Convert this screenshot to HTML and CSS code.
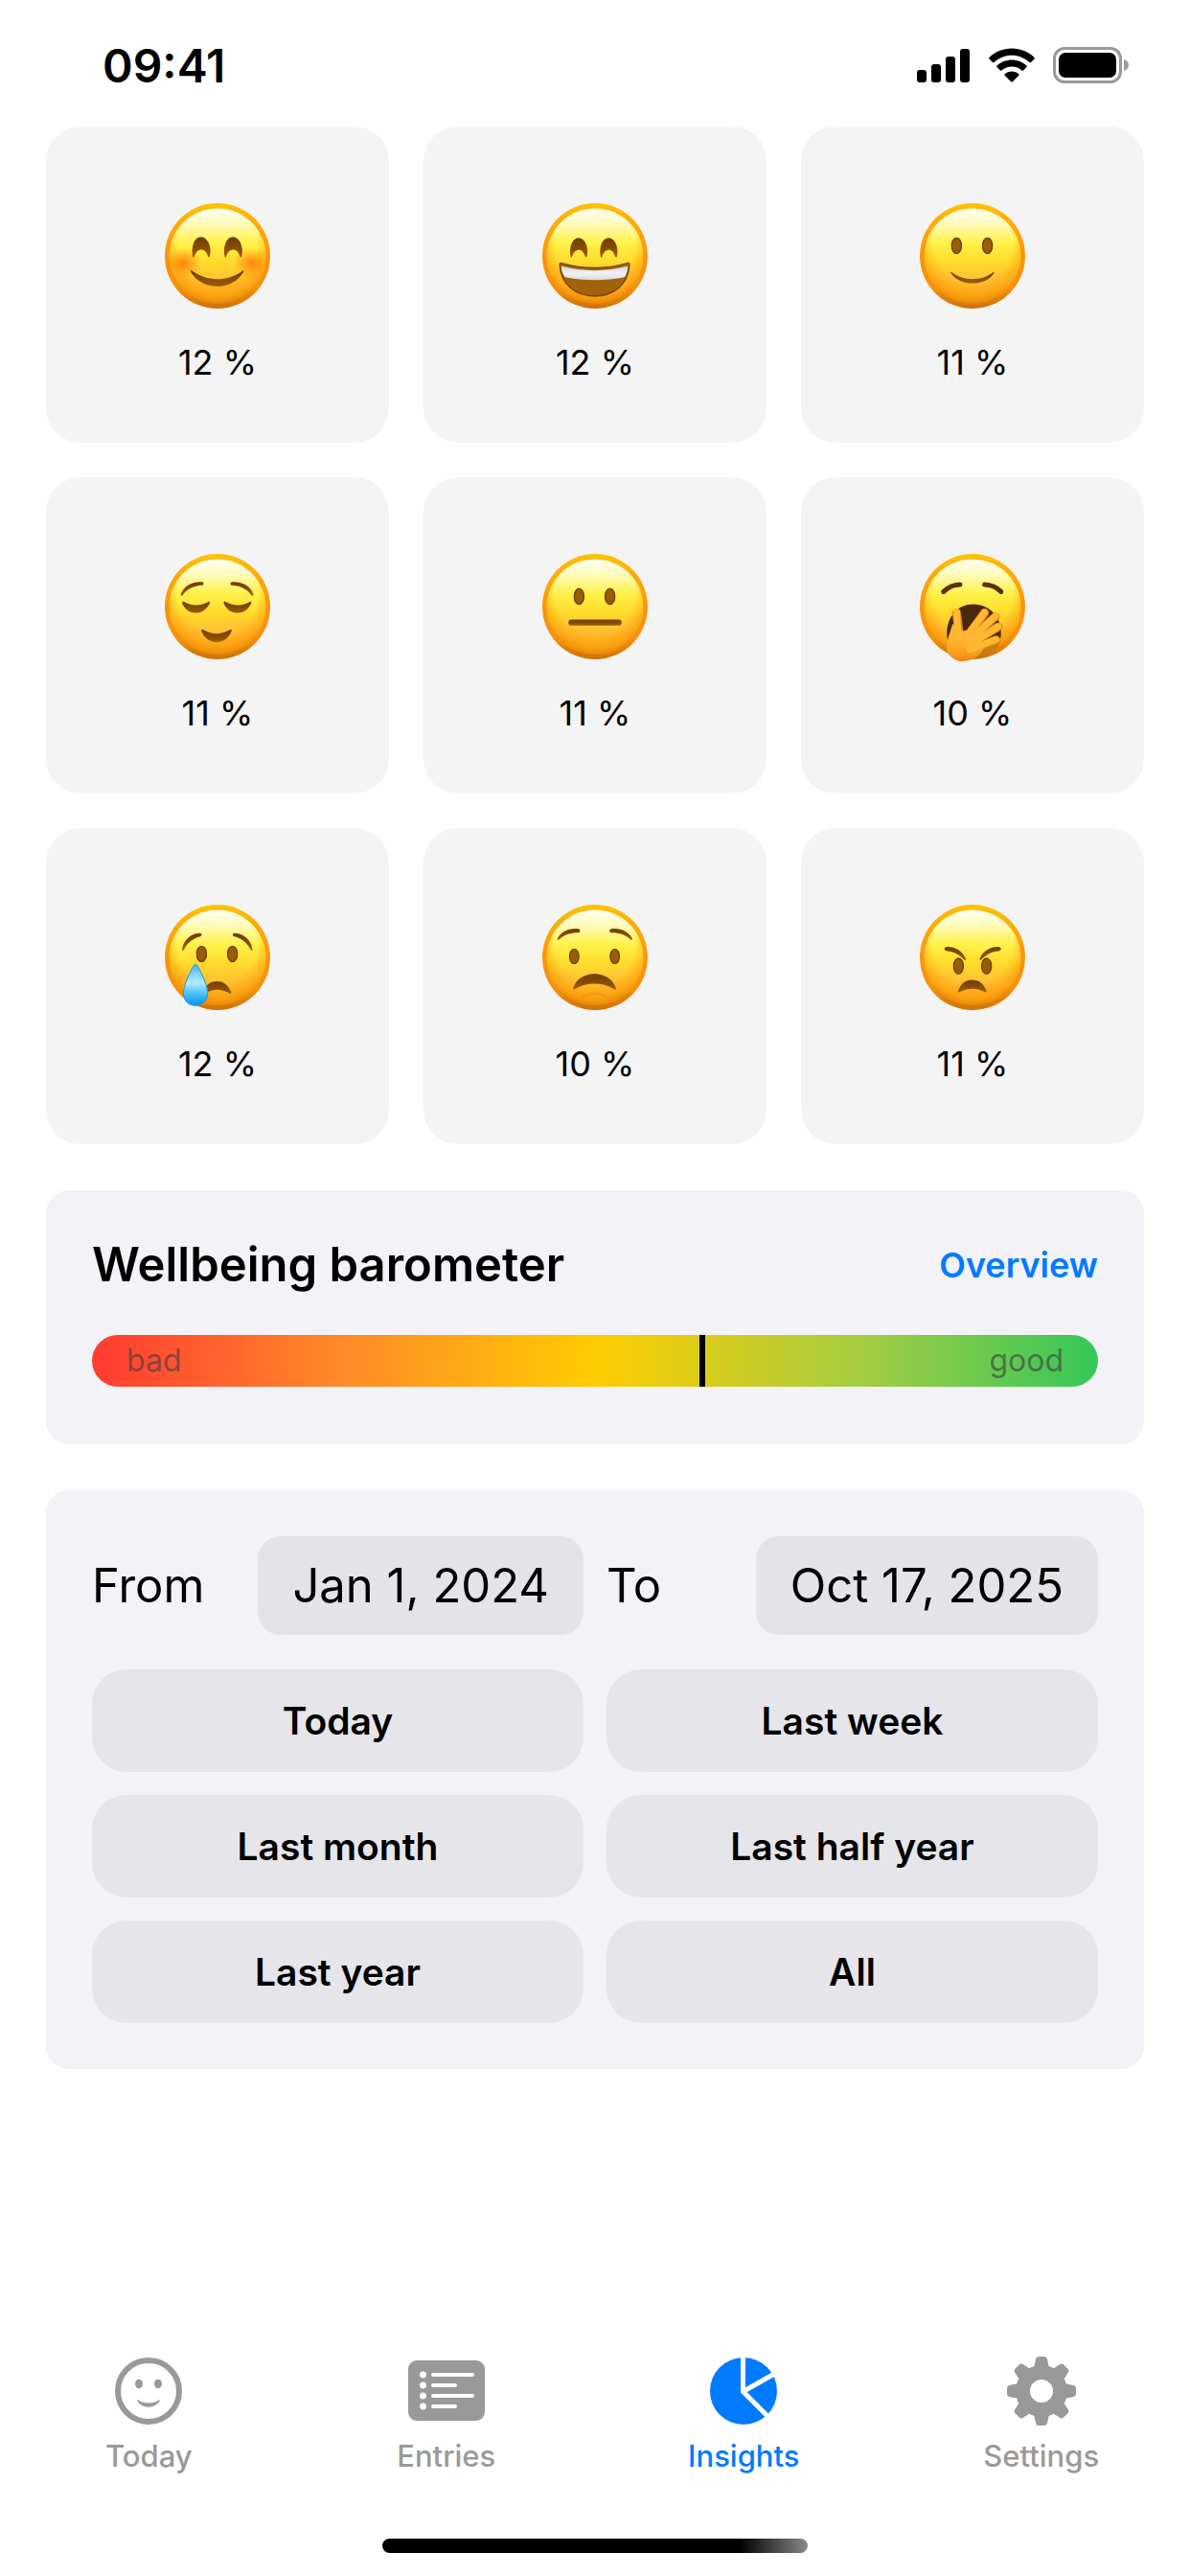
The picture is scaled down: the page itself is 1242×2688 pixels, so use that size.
FILE: index.html
```html
<!DOCTYPE html>
<html lang="en">
<head>
    <meta charset="UTF-8">
    <meta name="viewport" content="width=device-width, initial-scale=1.0">
    <title>Insights</title>
    <link rel="stylesheet" href="styles.css">
</head>
<body>

    <!-- shared face parts -->
    <svg class="defs" aria-hidden="true">
        <defs>
            <linearGradient id="rim" x1="0" y1="0" x2="0" y2="1">
                <stop offset="0" stop-color="#ffc400"/>
                <stop offset="0.15" stop-color="#ffae08"/>
                <stop offset="0.5" stop-color="#fb940c"/>
                <stop offset="0.8" stop-color="#f5920c"/>
                <stop offset="1" stop-color="#cc7206"/>
            </linearGradient>
            <linearGradient id="shine" x1="0" y1="0" x2="0" y2="1">
                <stop offset="0" stop-color="#fffef0"/>
                <stop offset="0.16" stop-color="#fffbbc"/>
                <stop offset="0.36" stop-color="#fff24a"/>
                <stop offset="0.56" stop-color="#ffdc2c"/>
                <stop offset="0.76" stop-color="#ffc032"/>
                <stop offset="1" stop-color="#fda814"/>
            </linearGradient>
            <radialGradient id="edge" cx="0.5" cy="0.36" r="0.64">
                <stop offset="0.64" stop-color="#ffa010" stop-opacity="0"/>
                <stop offset="0.86" stop-color="#fc9f0c" stop-opacity="0.7"/>
                <stop offset="1" stop-color="#e88608" stop-opacity="1"/>
            </radialGradient>
            <radialGradient id="blush">
                <stop offset="0" stop-color="#ff7a0a" stop-opacity="0.9"/>
                <stop offset="1" stop-color="#ff8a0a" stop-opacity="0"/>
            </radialGradient>
            <linearGradient id="teeth" x1="0" y1="0" x2="0" y2="1">
                <stop offset="0" stop-color="#cfd0d6"/>
                <stop offset="0.5" stop-color="#f3f3f6"/>
                <stop offset="1" stop-color="#d8d8de"/>
            </linearGradient>
            <linearGradient id="tear" x1="0" y1="0" x2="0" y2="1">
                <stop offset="0" stop-color="#46b4f0"/>
                <stop offset="0.45" stop-color="#b6ebff"/>
                <stop offset="0.7" stop-color="#4cc4fb"/>
                <stop offset="1" stop-color="#0a8fe8"/>
            </linearGradient>
            <linearGradient id="hand" x1="0" y1="0" x2="0" y2="1">
                <stop offset="0" stop-color="#ffb834"/>
                <stop offset="0.6" stop-color="#ffae2a"/>
                <stop offset="1" stop-color="#ee8810"/>
            </linearGradient>
            <linearGradient id="dark" x1="0" y1="0" x2="0" y2="1">
                <stop offset="0" stop-color="#6e3c00"/>
                <stop offset="1" stop-color="#9c5c04"/>
            </linearGradient>
        </defs>
        <symbol id="face" viewBox="0 0 109 109">
            <circle cx="54.5" cy="54.5" r="54.5" fill="url(#rim)"/>
            <ellipse cx="54.5" cy="54.5" rx="50" ry="49" fill="url(#shine)"/>
            <ellipse cx="54.5" cy="54.5" rx="50.5" ry="49.5" fill="url(#edge)"/>
        </symbol>
        <symbol id="arch" viewBox="0 0 20 22" overflow="visible">
            <path d="M1 20.5C-1.5 9 3.5 0 9.5 0C15.5 0 21 9 18.5 20C18 21.5 17 21 16.5 19.5C15 15.5 13 13 9.8 13C6.5 13 4 15.5 2.5 20C2 21.5 1.3 22 1 20.5Z" fill="url(#dark)"/>
        </symbol>
        <symbol id="eye" viewBox="0 0 12 18">
            <ellipse cx="6" cy="9" rx="5" ry="8" fill="#9a5c06" stroke="#744200" stroke-width="1.5"/>
        </symbol>
        <symbol id="cog" viewBox="0 0 80 72">
            <path d="M32 12L34 2.5Q34.600 0 37 0H43Q45.4 0 46 2.5L48 12V60L46 69.5Q45.4 72 43 72H37Q34.6 72 34 69.5L32 60Z"/>
        </symbol>
    </svg>

    <header class="status-bar">
        <time>09:41</time>
        <div class="status-icons">
            <svg width="56" height="36" viewBox="0 0 56 36">
                <rect x="0" y="23" width="10" height="13" rx="3"/>
                <rect x="15" y="17" width="10" height="19" rx="3"/>
                <rect x="30" y="9" width="10" height="27" rx="3"/>
                <rect x="45" y="1" width="10" height="35" rx="3"/>
            </svg>
            <svg width="48" height="36" viewBox="0 0 48 36">
                <path d="M24 0.5C33 0.5 41.5 4 47.5 10Q48.2 10.8 47.5 11.6L44 15Q43.3 15.7 42.5 15C37.5 10.3 31 7.7 24 7.7S10.5 10.3 5.5 15Q4.7 15.7 4 15L0.5 11.6Q-0.2 10.8 0.5 10C6.5 4 15 0.5 24 0.5Z"/>
                <path d="M24 12.5C30 12.5 35.5 14.8 39.5 18.5Q40.3 19.3 39.5 20.1L36 23.5Q35.3 24.2 34.5 23.5C31.6 21 28 19.6 24 19.6S16.4 21 13.5 23.5Q12.7 24.2 12 23.5L8.5 20.1Q7.7 19.3 8.5 18.5C12.5 14.8 18 12.5 24 12.5Z"/>
                <path d="M24 24.5C26.8 24.5 29.3 25.5 31.3 27.2Q32 28 31.3 28.8L24.8 35.3Q24 36 23.2 35.3L16.7 28.8Q16 28 16.7 27.2C18.7 25.5 21.2 24.5 24 24.5Z"/>
            </svg>
            <svg width="80" height="38" viewBox="0 0 80 38">
                <rect x="1.5" y="1.5" width="69" height="35" rx="10.5" fill="none" stroke="#999" stroke-width="3"/>
                <rect x="6" y="6" width="60" height="26" rx="7"/>
                <path d="M74 13C77 14 79 16 79 19S77 24 74 25Z" fill="#999"/>
            </svg>
        </div>
    </header>

    <main>

        <section class="moods">
            <div class="mood">
                <svg viewBox="0 0 109 109">
                    <use href="#face"/>
                    <ellipse cx="19" cy="62" rx="20" ry="16" fill="url(#blush)"/>
                    <ellipse cx="90" cy="62" rx="20" ry="16" fill="url(#blush)"/>
                    <use href="#arch" x="28" y="35" width="20" height="22"/>
                    <use href="#arch" x="61" y="35" width="20" height="22"/>
                    <path class="ink" d="M26.5 70C26.5 68.5 28.5 69.5 30 71C45 81 64 81 79 71C80.5 69.5 82 68.5 81.3 71C76 81 65 86 54 86S31 80 26.5 70Z"/>
                </svg>
                <span>12 %</span>
            </div>
            <div class="mood">
                <svg viewBox="0 0 109 109">
                    <use href="#face"/>
                    <use href="#arch" x="28" y="36" width="20" height="21"/>
                    <use href="#arch" x="59" y="36" width="20" height="21"/>
                    <path d="M18 63.5C18 61.5 19.5 62 21 62.5C42 68.5 67 68.5 87 62.5C89.5 61.5 90.5 62 90 64.5C88.5 84 74 96 54 96S19.5 84 18 63.5Z" fill="#a2640a" stroke="#7b4600" stroke-width="1.5"/>
                    <path d="M19.5 65C42 71 66 71 88.5 65C88.5 70 87 74 85 76.5C66 80.5 43 80.5 23.5 76.5C21 73 19.5 70 19.5 65Z" fill="url(#teeth)"/>
                </svg>
                <span>12 %</span>
            </div>
            <div class="mood">
                <svg viewBox="0 0 109 109">
                    <use href="#face"/>
                    <use href="#eye" x="32" y="35" width="12" height="18"/>
                    <use href="#eye" x="64" y="35" width="12" height="18"/>
                    <path class="ink" d="M32 72C32 70.5 33.5 71.5 34.5 72.5C46 80.5 63 80.5 74.5 72.5C75.5 71.5 77 70.5 76.5 72.5C72 79.5 64 82.8 54.5 82.8S36.5 79 32 72Z"/>
                </svg>
                <span>11 %</span>
            </div>
            <div class="mood">
                <svg viewBox="0 0 109 109">
                    <use href="#face"/>
                    <path class="ink" d="M16.5 42C19 33 29 28 38.5 29C41 29.5 40.5 32.5 38 32.5C30 33 23 36.5 18.5 42.5C17.5 43.7 16.2 43.5 16.5 42Z"/>
                    <path class="ink" d="M91.5 42C89 33 79 28 69.5 29C67 29.5 67.5 32.5 70 32.5C78 33 85 36.5 89.5 42.5C90.5 43.7 91.8 43.5 91.5 42Z"/>
                    <path class="ink" d="M18 51C17.5 49 19.5 49 21 50C28 54 37 54 44 50C45.5 49 47.3 49 46.5 51C43 58 38 61 32 61S21 58 18 51Z"/>
                    <path class="ink" d="M61 51C60.5 49 62.5 49 64 50C71 54 80 54 87 50C88.5 49 90.3 49 89.5 51C86 58 81 61 75 61S64 58 61 51Z"/>
                    <path class="ink" d="M38 80C37.3 78 39.5 78 41 79C49 83.5 58 83.5 66 79C67.5 78 69.5 78 69 80C66 87 61 91 53.5 91S41 87 38 80Z"/>
                </svg>
                <span>11 %</span>
            </div>
            <div class="mood">
                <svg viewBox="0 0 109 109">
                    <use href="#face"/>
                    <use href="#eye" x="32" y="35" width="12" height="18"/>
                    <use href="#eye" x="64" y="35" width="12" height="18"/>
                    <rect class="ink" x="27" y="68" width="55" height="6" rx="3"/>
                </svg>
                <span>11 %</span>
            </div>
            <div class="mood">
                <svg viewBox="0 0 109 109">
                    <use href="#face"/>
                    <path class="brow" d="M24.5 39C29 34.5 35 32 41.5 31.7"/>
                    <path class="brow" d="M84 39C79.5 34.5 73.5 32 67 31.7"/>
                    <path d="M28 82C28 64 40 52 55 52C71 52 84 64 84 82C84 96 73 104 58 108C40 108 28 98 28 82Z" fill="#4a280c"/>
                    <path d="M58 108C70 106 80 99 83 92L70 92L52 108Z" fill="#c77c12"/>
                    <g class="finger-shade">
                        <path d="M50 84L67 61"/>
                        <path d="M52 88L78 65"/>
                        <path d="M54 92L81 75.5"/>
                        <path d="M54 99L79 89"/>
                        <path d="M38 61L41 84"/>
                    </g>
                    <path d="M34 72C31 82 27.5 90 28 98C29 106 37 111 44 111C54 111 62 105 66 98L64 84L54 78L42 80Z" fill="url(#hand)"/>
                    <g class="finger">
                        <path d="M48 86L67 60.5"/>
                        <path d="M50 90L78 64.5"/>
                        <path d="M52 94L81 75"/>
                        <path d="M52 99L79 88.5"/>
                        <path d="M38 60L40 86"/>
                    </g>
                </svg>
                <span>10 %</span>
            </div>
            <div class="mood">
                <svg viewBox="0 0 109 109">
                    <use href="#face"/>
                    <path class="ink" d="M18 46C19 37 27 29.5 36.5 29.5C39 30 38.5 32.5 36.5 33C29 35 24 39 20 46C19 47.7 17.8 47.7 18 46Z"/>
                    <path class="ink" d="M90.5 46C89.5 37 81.5 29.5 72 29.5C69.5 30 70 32.5 72 33C79.5 35 84.5 39 88.5 46C89.5 47.7 90.7 47.7 90.5 46Z"/>
                    <use href="#eye" x="32" y="42" width="12" height="18"/>
                    <use href="#eye" x="64" y="42" width="12" height="18"/>
                    <path class="ink" d="M40 91C42 83 47 79.3 54 79.3C61 79.3 66 84 68.7 90.5C69 92.5 68 92.5 66.5 91.5C58 86.5 50 87 42 91.5Z"/>
                    <path d="M31.7 61.7C34 61.7 44.3 82 44.3 91.5C44.3 99 38.7 104.3 31.7 104.3S19.3 99 19.3 91.5C19.3 82 29.5 61.7 31.7 61.7Z" fill="url(#tear)" stroke="#1f9bea" stroke-width="1"/>
                </svg>
                <span>12 %</span>
            </div>
            <div class="mood">
                <svg viewBox="0 0 109 109">
                    <use href="#face"/>
                    <path class="ink" d="M15.7 35C19 28 28 24 37 25C40 25.5 39.5 29 37 29C29.5 29 23 31 17.5 35.8C16.2 36.8 15.2 36.5 15.7 35Z"/>
                    <path class="ink" d="M93 35C89.7 28 80.7 24 71.7 25C68.7 25.5 69.2 29 71.7 29C79.2 29 85.7 31 91.2 35.8C92.5 36.8 93.5 36.5 93 35Z"/>
                    <use href="#eye" x="27" y="45" width="12" height="17"/>
                    <use href="#eye" x="69" y="45" width="12" height="17"/>
                    <path class="ink" d="M32 86C35 77 44 71.7 54 71.7S73 77 76 86C76.5 88 75.5 88.3 74 87C62 80 46 80 34 87C32.5 88.3 31.5 88 32 86Z"/>
                    <path d="M42 95Q54 89 66 95" fill="none" stroke="#f58c0c" stroke-opacity="0.5" stroke-width="3" stroke-linecap="round"/>
                </svg>
                <span>10 %</span>
            </div>
            <div class="mood">
                <svg viewBox="0 0 109 109">
                    <use href="#face"/>
                    <path class="ink" d="M27.5 43.7C36 43 44 48 47.5 55.5C47.8 57.7 46.5 58 45.3 56.5C41 51.5 35 48.5 28 48C25 47.5 24.5 44.5 27.5 43.7Z"/>
                    <path class="ink" d="M82 43.7C73.5 43 65.5 48 62 55.5C61.7 57.7 63 58 64.2 56.5C68.5 51.5 74.5 48.5 81.5 48C84.5 47.5 85 44.5 82 43.7Z"/>
                    <use href="#eye" x="34" y="54" width="12" height="19"/>
                    <use href="#eye" x="63" y="54" width="12" height="19"/>
                    <path class="ink" d="M39.7 89C42 82 47 77.7 54 77.7S66.5 82 68.7 89C69 91 68 90.8 66.5 90C59 86 49.5 86 42 90C40.5 90.8 39.3 91 39.7 89Z"/>
                </svg>
                <span>11 %</span>
            </div>
        </section>

        <section class="panel">
            <div class="panel-head">
                <h2>Wellbeing barometer</h2>
                <a href="#overview">Overview</a>
            </div>
            <div class="barometer">
                <span>bad</span>
                <span>good</span>
                <div class="marker" style="left: 60.4%"></div>
            </div>
        </section>

        <section class="panel range">
            <div class="date">
                <label for="from">From</label>
                <button id="from" type="button">Jan 1, 2024</button>
            </div>
            <div class="date">
                <label for="to">To</label>
                <button id="to" type="button">Oct 17, 2025</button>
            </div>
            <button class="preset" type="button">Today</button>
            <button class="preset" type="button">Last week</button>
            <button class="preset" type="button">Last month</button>
            <button class="preset" type="button">Last half year</button>
            <button class="preset" type="button">Last year</button>
            <button class="preset" type="button">All</button>
        </section>

    </main>

    <nav class="tabs">
        <a href="#today">
            <svg viewBox="0 0 80 72">
                <circle cx="40" cy="36" r="32" fill="none" stroke="currentColor" stroke-width="6"/>
                <ellipse cx="30" cy="28.5" rx="4" ry="4.8"/>
                <ellipse cx="50" cy="28.5" rx="4" ry="4.8"/>
                <path d="M28.5 45C34 49.5 46 49.5 51.5 45Q52.3 45 51.8 46C49.5 50.5 45 52.7 40 52.7S30.5 50.5 28.2 46Q27.7 45 28.5 45Z"/>
            </svg>
            Today
        </a>
        <a href="#entries">
            <svg viewBox="0 0 80 72">
                <rect x="0" y="4" width="80" height="63" rx="9"/>
                <g class="lines">
                    <circle cx="15.5" cy="19" r="3.4"/>
                    <circle cx="15.5" cy="30" r="3.4"/>
                    <circle cx="15.5" cy="41" r="3.4"/>
                    <circle cx="15.5" cy="52" r="3.4"/>
                    <rect x="24" y="17" width="45" height="4" rx="2"/>
                    <rect x="24" y="28" width="27" height="4" rx="2"/>
                    <rect x="24" y="39" width="45" height="4" rx="2"/>
                    <rect x="24" y="50" width="27" height="4" rx="2"/>
                </g>
            </svg>
            Entries
        </a>
        <a class="active" href="#insights" aria-current="page">
            <svg viewBox="0 0 80 72">
                <circle cx="40" cy="36" r="35"/>
                <path d="M39.5 0V36.5L66 63M39.5 36.5L74 17" fill="none" stroke="#fff" stroke-width="5"/>
            </svg>
            Insights
        </a>
        <a href="#settings">
            <svg viewBox="0 0 80 72">
                <use href="#cog" width="80" height="72"/>
                <use href="#cog" width="80" height="72" transform="rotate(45 40 36)"/>
                <use href="#cog" width="80" height="72" transform="rotate(90 40 36)"/>
                <use href="#cog" width="80" height="72" transform="rotate(135 40 36)"/>
                <circle cx="40" cy="36" r="27"/>
                <circle class="hub" cx="40" cy="36" r="12"/>
            </svg>
            Settings
        </a>
    </nav>

    <div class="home-indicator"></div>

</body>
</html>
```
FILE: styles.css
```css
* {
    box-sizing: border-box;
}

body {
    display: flex;
    flex-direction: column;
    min-height: 100vh;
    margin: 0;
    font-family: Inter, 'Liberation Sans', sans-serif;
    font-size: 36px;
    color: #000;
    background-color: #fff;
}

button {
    border: none;
    font-family: inherit;
    color: inherit;
    cursor: pointer;
}

a {
    text-decoration: none;
}

.defs {
    position: absolute;
    width: 0;
    height: 0;
}

.status-bar {
    display: flex;
    justify-content: space-between;
    align-items: center;
    height: 132px;
    padding: 4px 63px 0 107px;
}

.status-bar time {
    font-size: 48px;
    font-weight: 600;
}

.status-icons {
    display: flex;
    align-items: center;
    gap: 19px;
}

main {
    display: flex;
    flex-direction: column;
    gap: 48px;
    padding: 0 48px;
}

.moods {
    display: grid;
    grid-template-columns: repeat(3, 1fr);
    gap: 36px;
}

.mood {
    display: flex;
    flex-direction: column;
    align-items: center;
    gap: 34px;
    padding: 80px 0 62px;
    border-radius: 36px;
    background-color: #f4f4f4;
}

.mood svg {
    width: 110px;
    height: 110px;
    overflow: visible;
}

.mood span {
    line-height: 44px;
}

.ink {
    fill: url(#dark);
}

.brow {
    fill: none;
    stroke: #5c300c;
    stroke-width: 5;
    stroke-linecap: round;
}

.finger,
.finger-shade {
    fill: none;
    stroke: #ffb834;
    stroke-width: 7;
    stroke-linecap: round;
}

.finger-shade {
    stroke: #d98612;
    stroke-width: 9;
}

.panel {
    padding: 48px;
    border-radius: 24px;
    background-color: #f2f2f7;
}

.panel-head {
    display: flex;
    justify-content: space-between;
    align-items: center;
    margin-bottom: 43px;
}

h2 {
    margin: 0;
    font-size: 49px;
    font-weight: 600;
    line-height: 60px;
}

.panel-head a {
    font-weight: 600;
    color: #007aff;
}

.barometer {
    position: relative;
    display: flex;
    justify-content: space-between;
    align-items: center;
    height: 54px;
    margin-bottom: 12px;
    padding: 0 36px 2px;
    border-radius: 27px;
    font-size: 32px;
    color: rgba(60, 60, 67, 0.6);
    background: linear-gradient(to right, #ff3b30, #ff8a28 25%, #ffcc00 50%, #a2cc42 77%, #34c759);
}

.marker {
    position: absolute;
    top: 0;
    width: 6px;
    height: 100%;
    background-color: #000;
}

.range {
    display: grid;
    grid-template-columns: 1fr 1fr;
    gap: 24px;
}

.date {
    display: flex;
    justify-content: space-between;
    align-items: center;
    margin-bottom: 12px;
    font-size: 49px;
}

.date button {
    height: 103px;
    padding: 0 36px;
    border-radius: 24px;
    font-size: 49px;
    background-color: #e3e3e8;
}

.preset {
    height: 107px;
    padding-bottom: 2px;
    border-radius: 36px;
    font-size: 39px;
    font-weight: 600;
    background-color: #e5e5ea;
}

.tabs {
    display: grid;
    grid-template-columns: repeat(4, 1fr);
    margin-top: auto;
}

.tabs a {
    display: flex;
    flex-direction: column;
    align-items: center;
    gap: 14px;
    font-size: 31px;
    font-weight: 500;
    line-height: 36px;
    color: #999;
}

.tabs a.active {
    color: #007aff;
}

.tabs svg {
    width: 80px;
    height: 72px;
    fill: currentColor;
}

.tabs .lines,
.tabs .hub {
    fill: #fff;
}

.home-indicator {
    width: 444px;
    height: 15px;
    margin: 68px auto 24px;
    border-radius: 8px;
    background: linear-gradient(to right, #000 84%, #888);
}
```
